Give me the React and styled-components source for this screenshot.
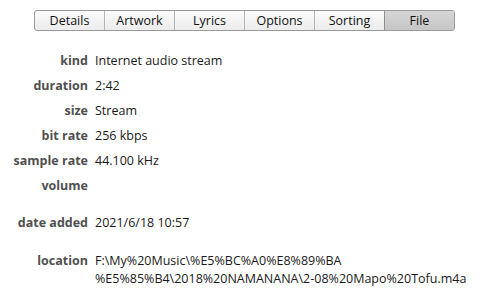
import React from 'react';
import styled, {createGlobalStyle} from 'styled-components';

const tabs = ['Details', 'Artwork', 'Lyrics', 'Options', 'Sorting', 'File'];

const rows = [
    {label: 'kind', value: 'Internet audio stream'},
    {label: 'duration', value: '2:42'},
    {label: 'size', value: 'Stream'},
    {label: 'bit rate', value: '256 kbps'},
    {label: 'sample rate', value: '44.100 kHz'},
    {label: 'volume', value: ''},
    {label: 'date added', value: '2021/6/18 10:57', gap: 12},
    {label: 'location', value: 'F:\\My%20Music\\%E5%BC%A0%E8%89%BA\n%E5%85%B4\\2018%20NAMANANA\\2-08%20Mapo%20Tofu.m4a', gap: 13},
];

function App() {
    return (
        <Page>
            <GlobalStyle />
            <TabBar>
                {tabs.map(t => (
                    <Tab key={t} active={t === 'File'}>{t}</Tab>
                ))}
            </TabBar>
            <InfoList>
                {rows.map(r => (
                    <Row key={r.label} gap={r.gap}>
                        <Label>{r.label}</Label>
                        <Value>{r.value}</Value>
                    </Row>
                ))}
            </InfoList>
        </Page>
    );
}

const GlobalStyle = createGlobalStyle`
    body {
        margin: 0;
        background: #fff;
        font-family: "Open Sans", "Noto Sans", sans-serif;
    }
`

const Page = styled.div`
    width: 488px;
    height: 302px;
    background: #fff;
    padding-top: 10px;
    box-sizing: border-box;
`

const TabBar = styled.div`
    display: flex;
    margin-left: 34px;
    width: 421px;
    height: 21px;
    border: 1px solid #9a9a9a;
    border-radius: 3px;
    box-sizing: border-box;
    overflow: hidden;
    background: linear-gradient(#fbfbfb, #ececec);
`

const Tab = styled.div`
    flex: 1;
    display: flex;
    align-items: center;
    justify-content: center;
    font-size: 12.5px;
    color: #111;
    border-left: 1px solid #b5b5b5;
    &:first-child { border-left: none; }
    background: ${props => props.active ? 'linear-gradient(#d6d6d6, #c6c6c6)' : 'transparent'};
    ${props => props.active && 'border-left-color: #8e8e8e;'}
`

const InfoList = styled.div`
    display: flex;
    flex-direction: column;
    margin-top: 21px;
`

const Row = styled.div`
    display: flex;
    align-items: flex-start;
    min-height: 25px;
    margin-top: ${props => props.gap || 0}px;
    font-size: 12.5px;
    line-height: 18px;
`

const Label = styled.div`
    width: 88px;
    text-align: right;
    font-weight: 700;
    color: #505050;
    flex-shrink: 0;
`

const Value = styled.div`
    margin-left: 7px;
    color: #1a1a1a;
    white-space: pre;
`

export default App;
